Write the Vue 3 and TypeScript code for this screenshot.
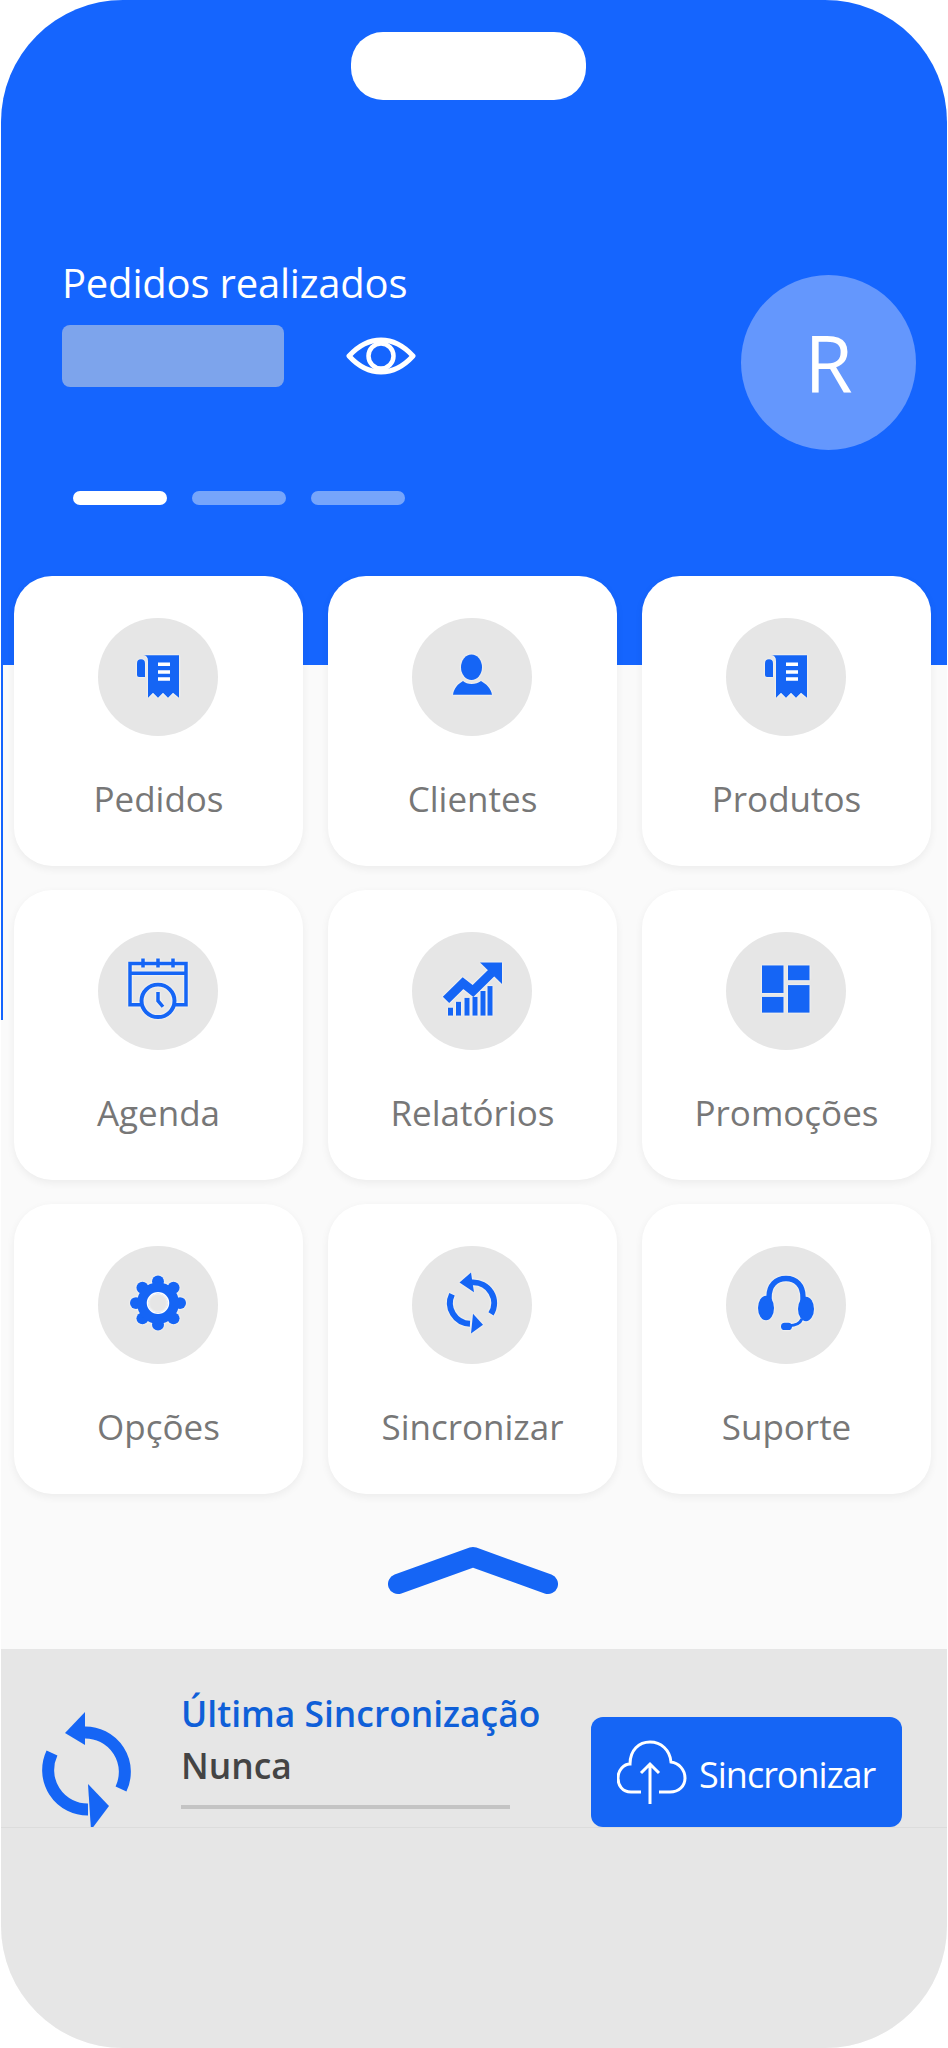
<script setup lang="ts">
interface Tile {
  label: string
  icon: string
}

const tiles: Tile[] = [
  { label: 'Pedidos', icon: 'receipt' },
  { label: 'Clientes', icon: 'person' },
  { label: 'Produtos', icon: 'receipt' },
  { label: 'Agenda', icon: 'calendar' },
  { label: 'Relatórios', icon: 'chart' },
  { label: 'Promoções', icon: 'blocks' },
  { label: 'Opções', icon: 'gear' },
  { label: 'Sincronizar', icon: 'sync' },
  { label: 'Suporte', icon: 'headset' }
]

// barras do grafico: [x, topo]
const bars = [[36, 77], [44, 71], [52.5, 67], [60.5, 66], [68.5, 60], [75.5, 55]]

// dentes da engrenagem
const teeth = [0, 45, 90, 135, 180, 225, 270, 315].map((deg) => ({
  x: 60 + 22 * Math.sin((deg * Math.PI) / 180),
  y: 58 - 22 * Math.cos((deg * Math.PI) / 180)
}))
</script>

<template>
  <div class="phone">
    <header class="hero">
      <div class="notch"></div>
      <div class="hero-row">
        <div class="hero-left">
          <div class="hero-title">Pedidos realizados</div>
          <div class="value-row">
            <div class="value-mask"></div>
            <svg class="eye" width="70" height="38" viewBox="0 0 70 38" fill="none" stroke="#fff">
              <path d="M3 19C14 7 24 3 35 3s21 4 32 16C56 31 46 35 35 35S14 31 3 19Z" stroke-width="5" stroke-linejoin="round" />
              <circle cx="35" cy="19" r="12.5" stroke-width="4.5" />
            </svg>
          </div>
          <div class="dots">
            <span class="dot dot-on"></span>
            <span class="dot"></span>
            <span class="dot"></span>
          </div>
        </div>
        <div class="avatar">R</div>
      </div>
    </header>

    <main class="content">
      <div class="grid">
        <div v-for="tile in tiles" :key="tile.label" class="tile">
          <div class="tile-circle">
            <svg class="tile-icon" width="120" height="118" viewBox="0 0 120 120" preserveAspectRatio="none" fill="#1565f5">
              <g v-if="tile.icon === 'receipt'">
                <path d="M49 38H81V81L75 76L70 81L65 76L60 81L55 76L50 81V44Q50 38 45 38Z" />
                <path d="M39 46Q39 42 43 42Q47 42 47 46V60H41Q39 60 39 58Z" />
                <path d="M60 47H72M60 55H72M60 62H72" stroke="#fff" stroke-width="3.5" fill="none" />
              </g>
              <g v-else-if="tile.icon === 'person'">
                <ellipse cx="59.5" cy="50" rx="10.5" ry="13" />
                <path d="M41 78C42 71 46 67 51 64C55 68 64 68 69 64C74 67 79 71 80 78Z" />
              </g>
              <g v-else-if="tile.icon === 'calendar'" fill="none" stroke="#1565f5" stroke-width="3.5">
                <path d="M44 74H32V32H88V74H76M32 42H88M45 27V36M60 27V36M75 27V36" />
                <circle cx="60" cy="70" r="16.5" stroke-width="4" />
                <path d="M60 61V70L65 76" />
              </g>
              <g v-else-if="tile.icon === 'chart'">
                <path d="M34 69L51 52L61 60L81 40" fill="none" stroke="#1565f5" stroke-width="9" />
                <path d="M68 31H90V53Z" />
                <rect v-for="bar in bars" :key="bar[0]" :x="bar[0]" :y="bar[1]" width="5" :height="85 - bar[1]" />
              </g>
              <g v-else-if="tile.icon === 'blocks'">
                <rect x="36" y="34" width="21.5" height="28" />
                <rect x="36" y="66" width="21.5" height="16" />
                <rect x="62" y="34" width="21.5" height="15" />
                <rect x="62" y="54" width="21.5" height="28" />
              </g>
              <g v-else-if="tile.icon === 'gear'">
                <circle v-for="(tooth, i) in teeth" :key="i" :cx="tooth.x" :cy="tooth.y" r="6" />
                <circle cx="60" cy="58" r="15.5" fill="none" stroke="#1565f5" stroke-width="11" />
                <circle cx="60" cy="58" r="10.5" fill="none" stroke="#fff" stroke-width="1.5" />
              </g>
              <g v-else-if="tile.icon === 'sync'">
                <path d="M60 37A21 21 0 0 1 79 69M40 49A21 21 0 0 0 58 79" fill="none" stroke="#1565f5" stroke-width="6" />
                <path d="M59 27L47.5 37L62 47Z" />
                <path d="M61 69L71 80L59 89Z" />
              </g>
              <g v-else>
                <path d="M43 60V52C43 40 50 33 60 33S77 40 77 52V60" fill="none" stroke="#1565f5" stroke-width="5.5" />
                <ellipse cx="40" cy="63" rx="8" ry="12.5" />
                <ellipse cx="80" cy="64" rx="8" ry="12.5" />
                <path d="M76 74C74 79 70 81 63 81" fill="none" stroke="#1565f5" stroke-width="3" />
                <rect x="55" y="78" width="11" height="7.5" rx="3.7" />
              </g>
            </svg>
          </div>
          <div class="tile-label">{{ tile.label }}</div>
        </div>
      </div>
      <div class="collapse">
        <svg width="170" height="50" viewBox="0 0 170 50" fill="none" stroke="#1565f5" stroke-width="20" stroke-linecap="round" stroke-linejoin="round">
          <path d="M10 38L85 11L160 38" />
        </svg>
      </div>
    </main>

    <section class="sync-panel">
      <svg class="sync-big" width="100" height="130" viewBox="0 0 100 130" fill="#1565f5">
        <path d="M49 27.5A39.5 39.5 0 0 1 85 84M16 48A39.5 39.5 0 0 0 52 104.5" fill="none" stroke="#1565f5" stroke-width="12" />
        <path d="M49 7L29 28L49 40Z" />
        <path d="M55 125L73 101L52 79Z" />
      </svg>
      <div class="sync-text">
        <div class="sync-title">Última Sincronização</div>
        <div class="sync-value">Nunca</div>
        <div class="sync-rule"></div>
      </div>
      <button class="sync-button">
        <svg width="70" height="66" viewBox="0 0 70 66" fill="none" stroke="#fff" stroke-width="3">
          <path d="M24 52H14C5 52 1 45 1 38C1 30 7 24 13 24C13 10 22 2 33 2C44 2 53 10 54 22C62 23 68 30 68 38C68 46 62 52 53 52H42" />
          <path d="M33 64V24M24 33L33 24L42 33" />
        </svg>
        <span>Sincronizar</span>
      </button>
    </section>

    <div class="bottom-fill"></div>
  </div>
</template>

<style>
body {
  background: #fff;
}
</style>

<style scoped>
.phone {
  width: 946px;
  height: 2048px;
  margin-left: 1px;
  border-radius: 122px;
  overflow: hidden;
  display: flex;
  flex-direction: column;
  background: #fafafa;
  font-family: "Open Sans", "Noto Sans", sans-serif;
}

.hero {
  height: 665px;
  flex: none;
  background: #1565fe;
  display: flex;
  flex-direction: column;
}

.notch {
  width: 235px;
  height: 68px;
  margin: 32px 0 0 350px;
  border-radius: 32px;
  background: #fff;
}

.hero-row {
  margin-top: 161px;
  padding: 0 31px 0 61px;
  display: flex;
  justify-content: space-between;
  align-items: flex-start;
}

.hero-title {
  font-size: 40px;
  line-height: 44px;
  letter-spacing: -0.2px;
  color: #fff;
}

.value-row {
  margin-top: 20px;
  display: flex;
  align-items: center;
  gap: 62px;
}

.value-mask {
  width: 222px;
  height: 62px;
  border-radius: 8px;
  background: #7da4ec;
}

.dots {
  margin-top: 104px;
  margin-left: 11px;
  display: flex;
  gap: 25px;
}

.dot {
  width: 94px;
  height: 14px;
  border-radius: 7px;
  background: #76a5fb;
}

.dot-on {
  background: #fff;
}

.avatar {
  width: 175px;
  height: 175px;
  margin-top: 14px;
  border-radius: 50%;
  background: #6497fd;
  color: #fff;
  font-size: 78px;
  font-weight: 500;
  display: flex;
  align-items: center;
  justify-content: center;
}

.content {
  height: 984px;
  flex: none;
  background: linear-gradient(#1565fe, #1565fe) left top / 2px 355px no-repeat;
}

.grid {
  margin-top: -89px;
  padding-left: 13px;
  display: grid;
  grid-template-columns: repeat(3, 289px);
  grid-auto-rows: 290px;
  gap: 24px 25px;
  position: relative;
}

.tile {
  border-radius: 38px;
  background: #fff;
  box-shadow: 0 3px 8px rgba(0, 0, 0, 0.06);
  display: flex;
  flex-direction: column;
  align-items: center;
  padding-top: 42px;
}

.tile-circle {
  width: 120px;
  height: 118px;
  margin-right: 1px;
  border-radius: 50%;
  background: #e6e6e6;
}

.tile-icon {
  display: block;
  filter: drop-shadow(0 0 1px #fff);
}

.tile-label {
  margin-top: 41px;
  font-size: 35px;
  line-height: 44px;
  color: #777;
}

.collapse {
  margin-top: 52px;
  padding-right: 3px;
  display: flex;
  justify-content: center;
}

.sync-panel {
  height: 179px;
  flex: none;
  box-sizing: border-box;
  border-bottom: 1px solid #dcdcdc;
  background: #e6e6e6;
  overflow: hidden;
  display: flex;
  align-items: flex-start;
  padding-left: 35px;
}

.sync-big {
  flex: none;
  margin-top: 56px;
}

.sync-text {
  width: 410px;
  flex: none;
  margin-left: 45px;
  padding-top: 42px;
}

.sync-title {
  font-size: 35.4px;
  line-height: 44px;
  font-weight: 600;
  color: #0f5fd8;
  white-space: nowrap;
}

.sync-value {
  margin-top: 8px;
  font-size: 35.4px;
  line-height: 44px;
  font-weight: 600;
  color: #444;
}

.sync-rule {
  width: 329px;
  height: 4px;
  margin-top: 18px;
  background: #c4c4c4;
}

.sync-button {
  width: 311px;
  height: 110px;
  flex: none;
  margin-top: 68px;
  border: none;
  border-radius: 12px;
  background: #1565f5;
  color: #fff;
  font-family: inherit;
  font-size: 36px;
  letter-spacing: -1px;
  display: flex;
  align-items: flex-start;
  gap: 12px;
  padding: 23px 0 0 26px;
}

.sync-button span {
  line-height: 70px;
}

.bottom-fill {
  flex: 1;
  background: #e6e6e6;
}
</style>
